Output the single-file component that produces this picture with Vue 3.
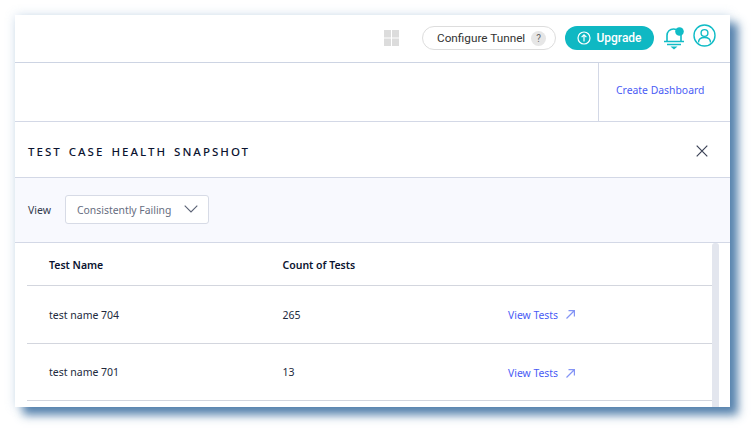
<script setup>
const rows = [
  { name: 'test name 704', count: 265 },
  { name: 'test name 701', count: 13 },
];
</script>

<template>
  <div class="page">
    <div class="panel">
      <header class="topbar">
        <svg class="apps" width="15" height="16" viewBox="0 0 15 16">
          <rect x="0" y="0" width="7" height="7.500" />
          <rect x="8" y="0" width="7" height="7.500" />
          <rect x="0" y="8.500" width="7" height="7.500" />
          <rect x="8" y="8.500" width="7" height="7.500" />
        </svg>
        <button class="tunnel" type="button">
          Configure Tunnel
          <span class="help">?</span>
        </button>
        <button class="upgrade" type="button">
          <svg width="14" height="14" viewBox="0 0 14 14" fill="none" stroke="#fff" stroke-width="1.2">
            <circle cx="7" cy="7" r="6" />
            <path d="M7 10.500V4M4.600 6.200 7 3.800l2.400 2.400" />
          </svg>
          Upgrade
        </button>
        <svg class="bell" width="22" height="23" viewBox="0 0 22 23" fill="none" stroke="#10bcc6" stroke-width="1.6">
          <path d="M4 14V8.500C4 4.500 7 2 10.500 2c1.200 0 2.200.3 3 .7M18 8v6" />
          <path d="M1 14.500h20M4 17.500h14" />
          <path d="M7.500 19.500h7L11 22.500z" fill="#10bcc6" stroke="none" />
          <circle cx="16.500" cy="4.500" r="4.300" fill="#10bcc6" stroke="none" />
        </svg>
        <svg class="user" width="23" height="23" viewBox="0 0 23 23" fill="none" stroke="#10bcc6" stroke-width="1.400">
          <circle cx="11.500" cy="11.500" r="10.500" />
          <circle cx="11.500" cy="9" r="3.400" />
          <path d="M5.500 18.500c0-3.400 2.400-5 6-5s6 1.600 6 5" />
        </svg>
      </header>

      <div class="subbar">
        <div class="subbar-action">
          <a class="link">Create Dashboard</a>
        </div>
      </div>

      <div class="title-row">
        <h2>TEST CASE HEALTH SNAPSHOT</h2>
        <svg width="12" height="12" viewBox="0 0 12 12" stroke="#3b4256" stroke-width="1.2">
          <path d="M.7.7l10.600 10.600M11.300.7.7 11.300" />
        </svg>
      </div>

      <div class="filter">
        <span class="filter-label">View</span>
        <div class="select">
          <span class="select-value">Consistently Failing</span>
          <svg width="14" height="8" viewBox="0 0 14 8" fill="none" stroke="#5a6275" stroke-width="1.1">
            <path d="M.7.7 7 7l6.300-6.300" />
          </svg>
        </div>
      </div>

      <div class="table-area">
        <div class="table">
          <div class="row head">
            <span>Test Name</span>
            <span>Count of Tests</span>
            <span></span>
          </div>
          <div v-for="row in rows" :key="row.name" class="row">
            <span>{{ row.name }}</span>
            <span>{{ row.count }}</span>
            <a class="link view">
              View Tests
              <svg width="9" height="9" viewBox="0 0 9 9" fill="none" stroke="#8494f5" stroke-width="1.200">
                <path d="M.5 8.500 8.500.5M2.500.6h5.900v5.900" />
              </svg>
            </a>
          </div>
        </div>
        <div class="scrollbar"></div>
      </div>
    </div>
  </div>
</template>

<style>
html,
body {
  margin: 0;
  height: 100%;
  overflow: hidden;
  background: #fff;
}
</style>

<style scoped>
.page {
  width: 755px;
  height: 432px;
  padding: 15px 25px 25px 15px;
  box-sizing: border-box;
  font-family: "Noto Sans", "Open Sans", sans-serif;
}

.panel {
  height: 392px;
  background: #fff;
  overflow: hidden;
  box-shadow: 8px 8px 9px rgba(60, 110, 160, 0.85), 0 0 10px rgba(120, 160, 200, 0.3);
}

.topbar {
  height: 46px;
  padding-bottom: 1px;
  display: flex;
  align-items: center;
  border-bottom: 1px solid #cdd4e3;
}

.apps {
  margin-left: 369px;
  fill: #dcdcdc;
}

.tunnel {
  margin-left: 23px;
  width: 134px;
  height: 24px;
  padding: 0 0 0 14px;
  display: flex;
  align-items: center;
  gap: 6px;
  background: #fff;
  border: 1px solid #dddddd;
  border-radius: 12px;
  font-family: Roboto, "Liberation Sans", sans-serif;
  font-size: 11.750px;
  color: #333;
}

.help {
  width: 15px;
  height: 15px;
  border-radius: 50%;
  background: #e6e6e6;
  color: #666;
  font-size: 10px;
  line-height: 15px;
  text-align: center;
}

.upgrade {
  margin-left: 9px;
  width: 89px;
  height: 24px;
  padding: 0;
  display: flex;
  align-items: center;
  justify-content: center;
  gap: 5px;
  background: #0fb8c3;
  border: 0;
  border-radius: 12px;
  font-family: Roboto, "Liberation Sans", sans-serif;
  font-weight: 500;
  font-size: 12px;
  color: #fff;
}

.bell {
  margin-left: 9px;
  margin-top: 1px;
}

.user {
  margin-left: 8px;
  margin-top: -5px;
}

.subbar {
  height: 58px;
  display: flex;
  justify-content: flex-end;
  border-bottom: 1px solid #d3d8e6;
}

.subbar-action {
  width: 132px;
  padding: 0 0 4px 17px;
  box-sizing: border-box;
  display: flex;
  align-items: center;
  border-left: 1px solid #d3d8e6;
}

.link {
  color: #4a5cf5;
  font-size: 10.400px;
}

.title-row {
  height: 53px;
  padding: 2px 22px 0 13px;
  display: flex;
  align-items: center;
  justify-content: space-between;
  border-bottom: 1px solid #d3d8e6;
}

.title-row h2 {
  margin: 0;
  padding-top: 2px;
  font-size: 11.500px;
  font-weight: 500;
  letter-spacing: 2.020px;
  word-spacing: 2px;
  color: #0b1330;
}

.filter {
  height: 62px;
  padding: 0 0 2px 13px;
  display: flex;
  align-items: center;
  gap: 14px;
  background: #f8f9fe;
  border-bottom: 1px solid #d3d8e6;
}

.filter-label {
  font-size: 10.500px;
  color: #333a4d;
  margin-top: 2px;
}

.select {
  width: 144px;
  height: 29px;
  padding: 0 10px 0 11px;
  box-sizing: border-box;
  display: flex;
  align-items: center;
  justify-content: space-between;
  background: #fff;
  border: 1px solid #d7dbe6;
  border-radius: 3px;
  font-size: 10.400px;
  color: #666d80;
}

.select-value {
  margin-top: 2px;
}

.table-area {
  display: flex;
  padding-left: 12px;
}

.table {
  width: 685px;
}

.row {
  height: 57px;
  padding-left: 22px;
  display: grid;
  grid-template-columns: 233.500px 225.500px 1fr;
  align-items: center;
  border-bottom: 1px solid #d3d6de;
  font-size: 10.500px;
  color: #222a3d;
}

.row.head {
  height: 41px;
  padding-top: 1px;
  font-weight: 600;
  color: #0b1330;
}

.row:nth-child(3) {
  height: 56px;
}

.row:nth-child(3) .view {
  padding-top: 2px;
}

.view {
  display: flex;
  align-items: center;
  gap: 8px;
}

.scrollbar {
  width: 7px;
  height: 170px;
  background: #e3e6ee;
  border-radius: 3px 3px 0 0;
}
</style>
